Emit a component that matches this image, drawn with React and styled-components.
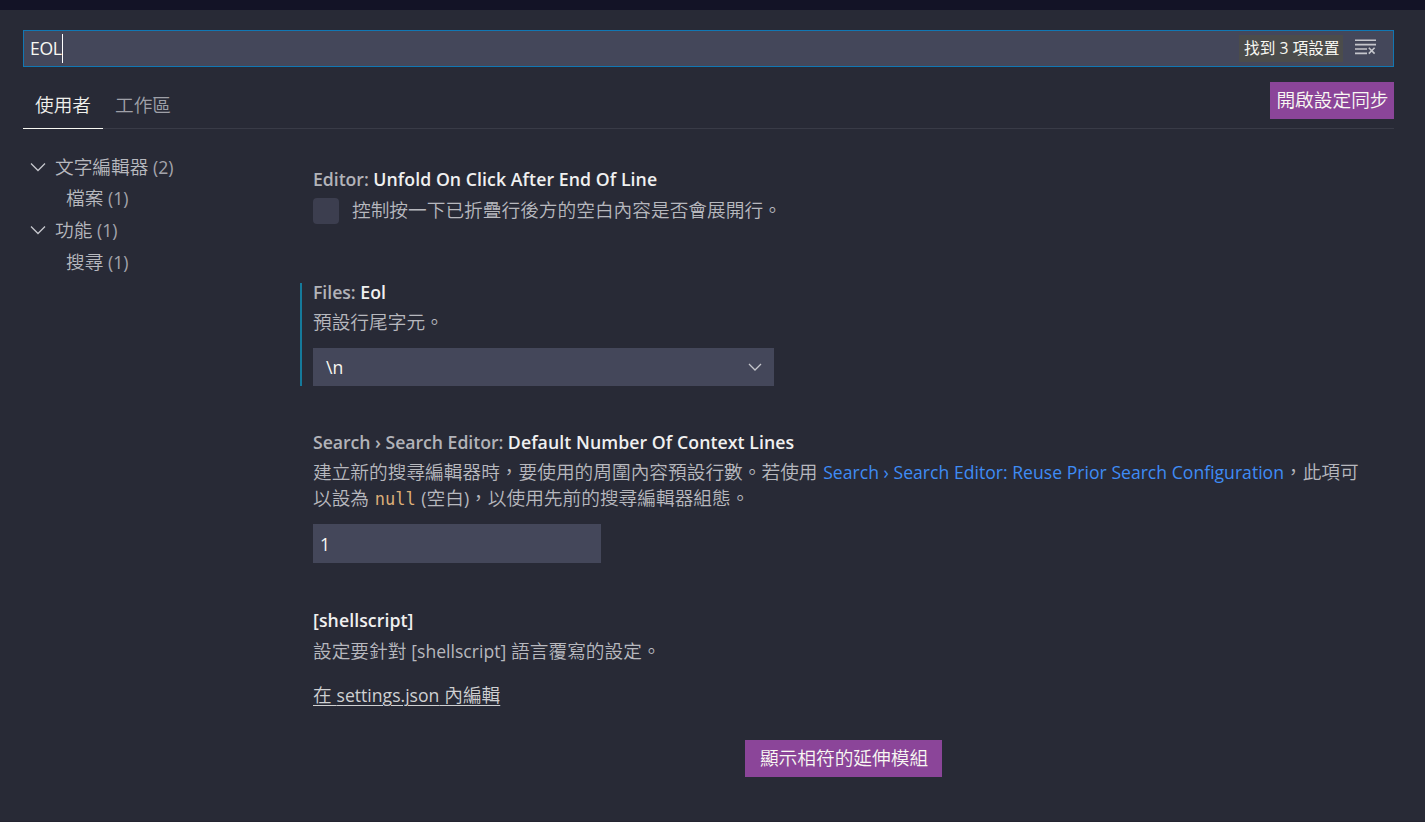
import React from "react";
import styled, { createGlobalStyle } from "styled-components";

const Global = createGlobalStyle`
  * { box-sizing: border-box; }
  body {
    margin: 0;
    background: #282a36;
    font-family: "Open Sans", "Noto Sans CJK TC", sans-serif;
    color: #b7b8be;
    overflow: hidden;
  }
`;

const Page = styled.div`
  height: 822px;
  border-top: 10px solid #131326;
  border-bottom: 1px solid #242531;
  padding: 20px 31px 0 23px;
  font-size: 18.7px;
  font-weight: 350;
`;

const Latin = styled.span`
  font-size: 17.6px;
  font-weight: 400;
`;

const SearchBox = styled.div`
  height: 37px;
  display: flex;
  align-items: center;
  background: #44475a;
  border: 1px solid #1177b3;
  padding: 0 17px 0 6px;
`;

const Query = styled.span`
  flex: 1;
  display: flex;
  align-items: center;
  color: #f8f8f2;
  font-size: 17.6px;
  font-weight: 400;
  letter-spacing: -0.3px;
`;

const QueryText = styled.span`
  padding-bottom: 2px;
`;

const Caret = styled.span`
  width: 1px;
  height: 29px;
  background: #fff;
`;

const ResultCount = styled.span`
  height: 27px;
  line-height: 27px;
  width: 104px;
  padding-left: 5px;
  margin-right: 12px;
  white-space: nowrap;
  background: #4b4c4b;
  color: #f8f8f2;
  font-size: 15.7px;
  font-weight: 400;
`;

const ClearIcon = styled.svg`
  width: 21px;
  height: 16px;
  margin-bottom: 3px;
  fill: none;
  stroke: #c5c6cc;
  stroke-width: 1.6;
`;

const Header = styled.div`
  height: 62px;
  display: flex;
  justify-content: space-between;
  border-bottom: 1px solid #393b47;
`;

const Tabs = styled.div`
  display: flex;
  padding-top: 15px;
`;

const Tab = styled.div`
  height: 47px;
  line-height: 45px;
  padding: 0 12px;
  width: ${(p) => (p.$active ? "80px" : "auto")};
  white-space: nowrap;
  color: ${(p) => (p.$active ? "#f0f0ec" : "#9fa0a8")};
  border-bottom: 1px solid ${(p) => (p.$active ? "#f8f8f2" : "transparent")};
`;

const Button = styled.button`
  height: 37px;
  width: ${(p) => p.$width};
  padding: 0 0 2px 1px;
  border: 0;
  background: #8b4599;
  color: #f8f8f2;
  font: inherit;
  line-height: 35px;
  white-space: nowrap;
`;

const SyncSlot = styled.div`
  padding-top: 15px;
`;

const Main = styled.div`
  display: flex;
`;

const Toc = styled.div`
  width: 277px;
  padding-top: 22px;
`;

const TocRow = styled.div`
  height: 31.6px;
  display: flex;
  align-items: center;
  padding-left: ${(p) => (p.$nested ? "43px" : "7px")};
  white-space: pre;
`;

const TocLabel = styled.span`
  padding-bottom: 3px;
`;

const TocCount = styled(Latin)`
  color: #a3a4ac;
`;

const Twisty = styled.svg`
  width: 16px;
  height: 16px;
  margin-right: 9px;
  fill: none;
  stroke: #c5c6cc;
  stroke-width: 1.3;
`;

const Settings = styled.div`
  flex: 1;
  padding-top: 41px;
`;

const Setting = styled.section`
  border-left: 2px solid ${(p) => (p.$modified ? "#157a9b" : "transparent")};
  padding-left: 11px;
  height: ${(p) => p.$height};
  margin-bottom: ${(p) => p.$gap};
`;

const Title = styled.div`
  height: 20px;
  line-height: ${(p) => p.$line || "18px"};
  font-size: 17.7px;
  font-weight: 650;
  letter-spacing: 0.07px;
  white-space: pre;
  color: #f0f0f0;
`;

const Category = styled.span`
  color: #b2b3b9;
  letter-spacing: -0.05px;
`;

const Description = styled.div`
  line-height: 26px;
  margin-top: ${(p) => p.$top || "7px"};
  white-space: nowrap;
  word-spacing: ${(p) => p.$wordSpacing || "0"};
`;

const CheckLine = styled.div`
  display: flex;
  align-items: center;
  margin-top: 8px;
  height: 26px;
  gap: 13px;
  white-space: nowrap;
`;

const CheckLabel = styled.span`
  padding-bottom: 5px;
`;

const Checkbox = styled.span`
  width: 26px;
  height: 26px;
  border-radius: 4px;
  background: #3c3e4f;
`;

const Select = styled.div`
  width: 461px;
  height: 38px;
  margin-top: 13px;
  padding: 0 11px 0 13px;
  display: flex;
  align-items: center;
  justify-content: space-between;
  background: #44475a;
  color: #f8f8f2;
`;

const SelectArrow = styled(Twisty)`
  margin: 0;
`;

const NumberField = styled.div`
  width: 288px;
  height: 39px;
  margin-top: 12px;
  padding-left: 7px;
  display: flex;
  align-items: center;
  background: #44475a;
  color: #f8f8f2;
`;

const SettingLink = styled.a`
  color: #3f8cf5;
  word-spacing: 0.1px;
`;

const Code = styled.code`
  font-family: "DejaVu Sans Mono", monospace;
  font-size: 17px;
  font-weight: 400;
  color: #dcae78;
`;

const EditLink = styled.a`
  display: inline-block;
  margin-top: 18px;
  line-height: 26px;
  color: #cfd0d2;
  text-decoration: underline;
  text-underline-offset: 3px;
  text-decoration-thickness: 1px;
`;

const Footer = styled.div`
  padding-left: 445px;
`;

const Chevron = () => (
  <Twisty viewBox="0 0 16 16">
    <path d="M1 4.5 8 11.5 15 4.5" />
  </Twisty>
);

const toc = [
  { label: "文字編輯器", count: 2 },
  { label: "檔案", count: 1, nested: true },
  { label: "功能", count: 1 },
  { label: "搜尋", count: 1, nested: true },
];

export default function App() {
  return (
    <>
      <Global />
      <Page lang="zh-Hant">
        <SearchBox>
          <Query>
            <QueryText>EOL</QueryText>
            <Caret />
          </Query>
          <ResultCount>找到 3 項設置</ResultCount>
          <ClearIcon viewBox="0 0 21 16">
            <path d="M0 1.3h21M0 5.6h21M0 10h12M0 14.4h12M13.8 8.8l5.8 5.8M19.6 8.8l-5.8 5.8" />
          </ClearIcon>
        </SearchBox>
        <Header>
          <Tabs>
            <Tab $active>使用者</Tab>
            <Tab>工作區</Tab>
          </Tabs>
          <SyncSlot>
            <Button $width="124px">開啟設定同步</Button>
          </SyncSlot>
        </Header>
        <Main>
          <Toc>
            {toc.map((item) => (
              <TocRow key={item.label} $nested={item.nested}>
                {!item.nested && <Chevron />}
                <TocLabel>{item.label}</TocLabel>
                <TocCount>{` (${item.count})`}</TocCount>
              </TocRow>
            ))}
          </Toc>
          <Settings>
            <Setting $height="54px" $gap="59px">
              <Title><Category>Editor: </Category>Unfold On Click After End Of Line</Title>
              <CheckLine>
                <Checkbox />
                <CheckLabel>控制按一下已折疊行後方的空白內容是否會展開行。</CheckLabel>
              </CheckLine>
            </Setting>
            <Setting $modified $height="103px" $gap="46px">
              <Title><Category>Files: </Category>Eol</Title>
              <Description $top="6px">預設行尾字元。</Description>
              <Select>
                <Latin>\n</Latin>
                <SelectArrow viewBox="0 0 16 16">
                  <path d="M2 5 8 11 14 5" />
                </SelectArrow>
              </Select>
            </Setting>
            <Setting $height="131px" $gap="47px">
              <Title $line="20px"><Category>Search › Search Editor: </Category>Default Number Of Context Lines</Title>
              <Description $wordSpacing="0.8px">
                建立新的搜尋編輯器時，要使用的周圍內容預設行數。若使用{" "}
                <SettingLink><Latin>Search › Search Editor: Reuse Prior Search Configuration</Latin></SettingLink>
                ，此項可<br />
                以設為 <Code>null</Code> <Latin>(</Latin>空白<Latin>)</Latin>，以使用先前的搜尋編輯器組態。
              </Description>
              <NumberField><Latin>1</Latin></NumberField>
            </Setting>
            <Setting $height="96px" $gap="34px">
              <Title $line="20px">[shellscript]</Title>
              <Description $top="8px">設定要針對 <Latin>[shellscript]</Latin> 語言覆寫的設定。</Description>
              <EditLink>在 <Latin>settings.json</Latin> 內編輯</EditLink>
            </Setting>
            <Footer><Button $width="197px">顯示相符的延伸模組</Button></Footer>
          </Settings>
        </Main>
      </Page>
    </>
  );
}
